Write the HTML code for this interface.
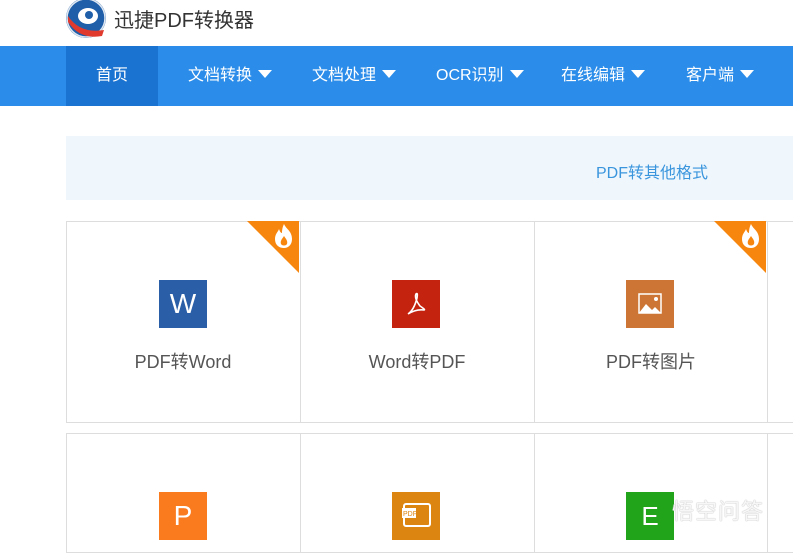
<!DOCTYPE html>
<html><head><meta charset="utf-8"><style>
*{margin:0;padding:0;box-sizing:border-box}
body{width:793px;height:534px;overflow:hidden;background:#fff;font-family:"Liberation Sans","Noto Sans CJK SC",sans-serif;position:relative}
.abs{position:absolute}
.nav{left:0;top:46px;width:793px;height:60px;background:#2b8de9}
.nav div{position:absolute;top:0;height:60px;line-height:60px;color:#fff;font-size:16px}
.tri{display:inline-block;width:0;height:0;border-left:7px solid transparent;border-right:7px solid transparent;border-top:8px solid #fff;vertical-align:middle;margin-left:6px;margin-top:-3px}
.band{left:66px;top:136px;width:727px;height:64px;background:#eff7fd}
.card{position:absolute;border:1px solid #ddd;background:#fff}
.ic{position:absolute;width:48px;height:48px;color:#fff;text-align:center}
.lbl{position:absolute;width:234px;text-align:center;font-size:18px;color:#555;top:348px}
.hot{position:absolute;width:0;height:0;border-left:52px solid transparent;border-top:52px solid #f7860f}
</style></head><body>
<svg class="abs" style="left:66px;top:0" width="40" height="40" viewBox="0 0 40 40"><circle cx="20" cy="18" r="20" fill="#1f5ea8"/><circle cx="20" cy="18" r="19" fill="none" stroke="#dfe8f2" stroke-width="1.5"/><ellipse cx="22" cy="16" rx="10" ry="8" fill="#fff"/><circle cx="23" cy="15" r="4" fill="#1f5ea8"/><path d="M2 16 Q14 34 38 30 L36 36 Q14 40 2 22Z" fill="#e03a2e"/></svg>
<div class="abs" style="left:114px;top:4px;font-size:20px;color:#333">迅捷PDF转换器</div>
<div class="abs nav">
<div style="left:66px;width:92px;background:#1a73d1;text-align:center">首页</div>
<div style="left:188px">文档转换<span class="tri"></span></div>
<div style="left:312px">文档处理<span class="tri"></span></div>
<div style="left:436px">OCR识别<span class="tri"></span></div>
<div style="left:561px">在线编辑<span class="tri"></span></div>
<div style="left:686px">客户端<span class="tri"></span></div>
</div>
<div class="abs band"></div>
<div class="abs" style="left:596px;top:159px;font-size:16px;color:#3a95dd">PDF转其他格式</div>

<div class="card" style="left:66px;top:221px;width:235px;height:202px"></div>
<div class="card" style="left:300px;top:221px;width:235px;height:202px"></div>
<div class="card" style="left:534px;top:221px;width:234px;height:202px"></div>
<div class="card" style="left:767px;top:221px;width:40px;height:202px"></div>
<div class="card" style="left:66px;top:433px;width:235px;height:120px"></div>
<div class="card" style="left:300px;top:433px;width:235px;height:120px"></div>
<div class="card" style="left:534px;top:433px;width:234px;height:120px"></div>
<div class="card" style="left:767px;top:433px;width:40px;height:120px"></div>

<div class="hot" style="left:247px;top:221px"></div>
<div class="hot" style="left:714px;top:221px"></div>
<svg class="abs" style="left:272px;top:223px" width="24" height="26" viewBox="0 0 24 26"><path d="M12 1 C14 6 20 8 20 16 C20 22 16 25 12 25 C7 25 3 22 3 16 C3 11 6 9 7 6 C8 9 9 10 10 10 C10 6 11 3 12 1Z" fill="#fff"/><path d="M12 13 C14 16 16 18 15 21 C14 23 10 23 9 21 C8 18 10 16 12 13Z" fill="#f7860f"/></svg>
<svg class="abs" style="left:739px;top:223px" width="24" height="26" viewBox="0 0 24 26"><path d="M12 1 C14 6 20 8 20 16 C20 22 16 25 12 25 C7 25 3 22 3 16 C3 11 6 9 7 6 C8 9 9 10 10 10 C10 6 11 3 12 1Z" fill="#fff"/><path d="M12 13 C14 16 16 18 15 21 C14 23 10 23 9 21 C8 18 10 16 12 13Z" fill="#f7860f"/></svg>

<div class="ic" style="left:159px;top:280px;background:#2a5fa8;font-size:28px;line-height:48px">W</div>
<div class="ic" style="left:392px;top:280px;background:#c4240f"><svg width="48" height="48"><path d="M16 34 Q22 30 25 18 Q26 12 24 14 Q22 18 28 26 Q34 30 32 30 Q24 29 16 34Z" fill="none" stroke="#fff" stroke-width="1.6"/></svg></div>
<div class="ic" style="left:626px;top:280px;background:#cc7535"><svg width="48" height="48"><rect x="13" y="14" width="22" height="19" fill="none" stroke="#fff" stroke-width="1.5"/><path d="M13 33 L20 24 L26 30 L29 27 L35 33Z" fill="#fff"/><circle cx="30" cy="19" r="2" fill="#fff"/></svg></div>
<div class="lbl" style="left:66px">PDF转Word</div>
<div class="lbl" style="left:300px">Word转PDF</div>
<div class="lbl" style="left:534px">PDF转图片</div>

<div class="ic" style="left:159px;top:492px;background:#fa7a1e;font-size:28px;line-height:48px">P</div>
<div class="ic" style="left:392px;top:492px;background:#dc8510"><svg width="48" height="48"><rect x="12" y="12" width="26" height="22" rx="2" fill="none" stroke="#fff" stroke-width="2"/><rect x="10" y="16" width="14" height="10" fill="#fff"/><text x="11" y="24" font-size="7" fill="#dc8510" font-family="Liberation Sans">PDF</text></svg></div>
<div class="ic" style="left:626px;top:492px;background:#21a31a;font-size:26px;line-height:48px">E</div>
<div class="abs" style="left:672px;top:494px;font-size:22px;color:rgba(250,250,250,.95);letter-spacing:1px;text-shadow:0 0 1px #bbb,0 0 1px #bbb">悟空问答</div>
</body></html>
